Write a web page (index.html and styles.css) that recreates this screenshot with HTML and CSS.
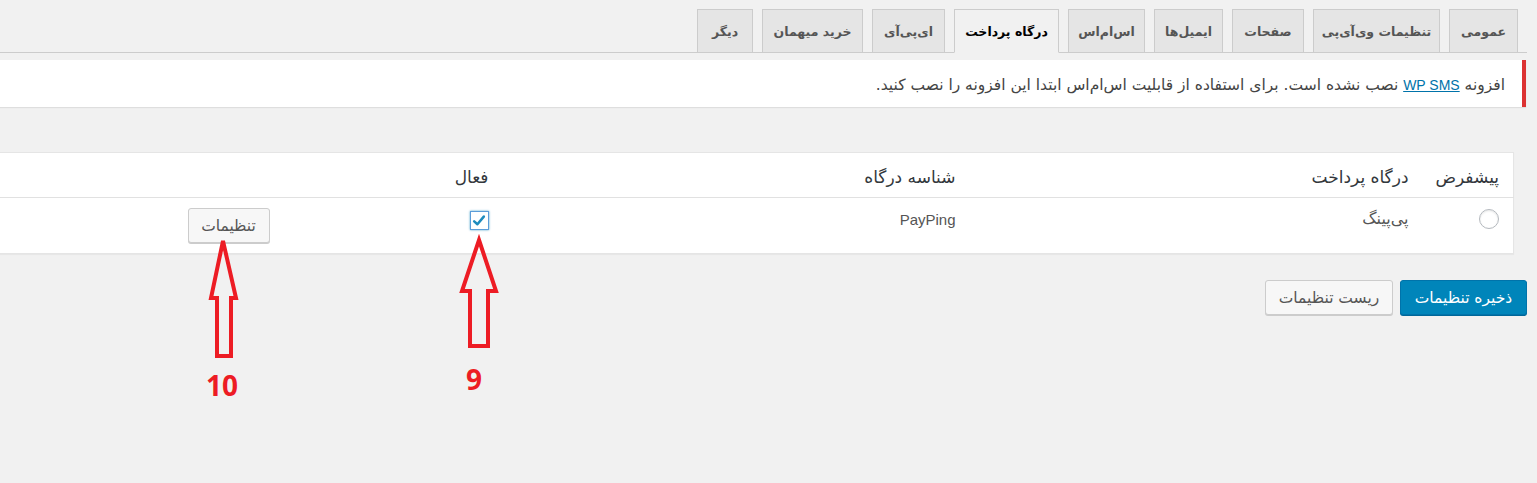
FILE: index.html
```html
<!DOCTYPE html>
<html lang="fa" dir="rtl">
<head>
<meta charset="utf-8">
<title>تنظیمات</title>
<link rel="stylesheet" href="styles.css">
</head>
<body>
<div class="wrap">
  <nav class="tabs">
    <a class="tab t1" href="#">عمومی</a>
    <a class="tab t2" href="#">تنظیمات وی‌آی‌پی</a>
    <a class="tab t3" href="#">صفحات</a>
    <a class="tab t4" href="#">ایمیل‌ها</a>
    <a class="tab t5" href="#">اس‌ام‌اس</a>
    <a class="tab t6 active" href="#">درگاه پرداخت</a>
    <a class="tab t7" href="#">ای‌پی‌آی</a>
    <a class="tab t8" href="#">خرید میهمان</a>
    <a class="tab t9" href="#">دیگر</a>
  </nav>

  <div class="notice">
    <p>افزونه <a href="#">WP SMS</a> نصب نشده است. برای استفاده از قابلیت اس‌ام‌اس ابتدا این افزونه را نصب کنید.</p>
  </div>

  <form class="settings">
    <table class="gateways">
      <colgroup>
        <col class="c1"><col class="c2"><col class="c3"><col class="c4"><col>
      </colgroup>
      <thead>
        <tr>
          <th>پیشفرض</th>
          <th>درگاه پرداخت</th>
          <th>شناسه درگاه</th>
          <th>فعال</th>
          <th></th>
        </tr>
      </thead>
      <tbody>
        <tr>
          <td><span class="radio"></span></td>
          <td><span class="cell-text">پی‌پینگ</span></td>
          <td><span class="cell-text latin">PayPing</span></td>
          <td>
            <span class="checkbox">
              <svg viewBox="0 0 20 20" width="16" height="16"><path d="M4 10.5 L8 14 L16 4.5" fill="none" stroke="#1e8cbe" stroke-width="3.2" stroke-linecap="round" stroke-linejoin="round"/></svg>
            </span>
          </td>
          <td><button type="button" class="btn btn-cfg">تنظیمات</button></td>
        </tr>
      </tbody>
    </table>

    <div class="actions">
      <button type="button" class="btn btn-primary">ذخیره تنظیمات</button>
      <button type="button" class="btn btn-reset">ریست تنظیمات</button>
    </div>
  </form>
</div>

<svg class="annot" width="1537" height="483" viewBox="0 0 1537 483">
  <polygon points="223,241 236,298 231,298 231,356 217,356 217,298 211,298" fill="none" stroke="#ed1c24" stroke-width="4" stroke-linejoin="miter"/>
  <polygon points="479,240 496,291 488,291 488,346 470,346 470,291 462,291" fill="none" stroke="#ed1c24" stroke-width="4" stroke-linejoin="miter"/>
</svg>
<div class="label l10">10</div>
<div class="label l9">9</div>
</body>
</html>
```

FILE: styles.css
```css
html, body {
  margin: 0;
  padding: 0;
  background: #f1f1f1;
  overflow: hidden;
}
body {
  width: 1537px;
  height: 483px;
  position: relative;
  font-family: "DejaVu Sans", sans-serif;
  color: #444;
  font-size: 13px;
}
.wrap {
  margin: 0 10px 0 -12px;
}

/* Tabs */
.tabs {
  display: flex;
  gap: 9px;
  padding: 9px 9px 0 0;
  border-bottom: 1px solid #ccc;
  height: 43px;
}
.tab {
  box-sizing: border-box;
  height: 44px;
  margin-bottom: -1px;
  display: flex;
  align-items: center;
  justify-content: center;
  padding: 0 8px;
  border: 1px solid #ccc;
  background: #e5e5e5;
  color: #555;
  font-weight: bold;
  font-size: 12.5px;
  text-decoration: none;
  white-space: nowrap;
}
.tab.active {
  background: #f1f1f1;
  color: #000;
  border-bottom-color: #f1f1f1;
}
.t1 { width: 69px; }
.t2 { width: 127px; }
.t3 { width: 72px; }
.t4 { width: 69px; }
.t5 { width: 77px; }
.t6 { width: 105px; }
.t7 { width: 73px; }
.t8 { width: 101px; }
.t9 { width: 56px; }

/* Notice */
.notice {
  margin: 7px 1px 0 0;
  background: #fff;
  border-right: 4px solid #dc3232;
  box-shadow: 0 1px 1px rgba(0,0,0,.08);
  height: 47px;
  display: flex;
  align-items: center;
  padding: 2px 17px 0 12px;
  box-sizing: border-box;
}
.notice p {
  margin: 0;
  font-size: 15.5px;
  color: #444;
}
.notice a {
  color: #0073aa;
  text-decoration: underline;
  font-family: "Liberation Sans", sans-serif;
  font-size: 14px;
}

/* Table */
.settings {
  margin-top: 45px;
}
.gateways {
  width: calc(100% - 13px);
  margin-right: 13px;
  table-layout: fixed;
  border-collapse: collapse;
  background: #fff;
  border: 1px solid #e5e5e5;
  box-shadow: 0 1px 1px rgba(0,0,0,.04);
}
.c1 { width: 91px; }
.c2 { width: 453px; }
.c3 { width: 467px; }
.c4 { width: 219px; }
.gateways th {
  height: 41px;
  padding: 3px 14px 0 0;
  text-align: right;
  font-weight: normal;
  font-size: 17px;
  color: #32373c;
  border-bottom: 1px solid #e1e1e1;
  vertical-align: middle;
}
.gateways td {
  height: 55px;
  padding: 0 14px 0 0;
  vertical-align: top;
  text-align: right;
}
.cell-text {
  display: block;
  padding-top: 11px;
  font-size: 16px;
  color: #555;
}
.latin {
  font-family: "Liberation Sans", "DejaVu Sans", sans-serif;
  font-size: 15px;
  padding-top: 13px;
}
.radio {
  display: block;
  box-sizing: border-box;
  width: 20px;
  height: 20px;
  margin-top: 11px;
  border: 1px solid #b4b9be;
  border-radius: 50%;
  background: #fff;
  box-shadow: inset 0 1px 2px rgba(0,0,0,.1);
}
.checkbox {
  display: flex;
  align-items: center;
  justify-content: center;
  box-sizing: border-box;
  width: 19px;
  height: 19px;
  margin-top: 13px;
  border: 1px solid #5b9dd9;
  background: #fff;
  box-shadow: 0 0 2px rgba(30,140,190,.8);
}

/* Buttons */
.btn {
  box-sizing: border-box;
  height: 35px;
  border-radius: 3px;
  font-family: "DejaVu Sans", sans-serif;
  font-size: 15.5px;
  cursor: pointer;
  padding: 0 4px;
  white-space: nowrap;
}
.btn-cfg {
  margin-top: 10px;
  width: 82px;
  background: #f7f7f7;
  border: 1px solid #ccc;
  box-shadow: 0 1px 0 #ccc;
  color: #555;
}
.actions {
  display: flex;
  gap: 7px;
  margin-top: 26px;
}
.btn-primary {
  width: 127px;
  background: #0085ba;
  border: 1px solid #0073aa;
  box-shadow: 0 1px 0 #006799;
  color: #fff;
}
.btn-reset {
  width: 128px;
  background: #f7f7f7;
  border: 1px solid #ccc;
  box-shadow: 0 1px 0 #ccc;
  color: #555;
}

/* Annotations */
.annot {
  position: absolute;
  left: 0;
  top: 0;
  pointer-events: none;
}
.label {
  position: absolute;
  font-family: "Open Sans", "Liberation Sans", sans-serif;
  font-weight: bold;
  font-size: 28px;
  line-height: 1;
  color: #ed1c24;
  direction: ltr;
}
.l10 { left: 206px; top: 371px; }
.l9 { left: 466px; top: 365px; }
```
